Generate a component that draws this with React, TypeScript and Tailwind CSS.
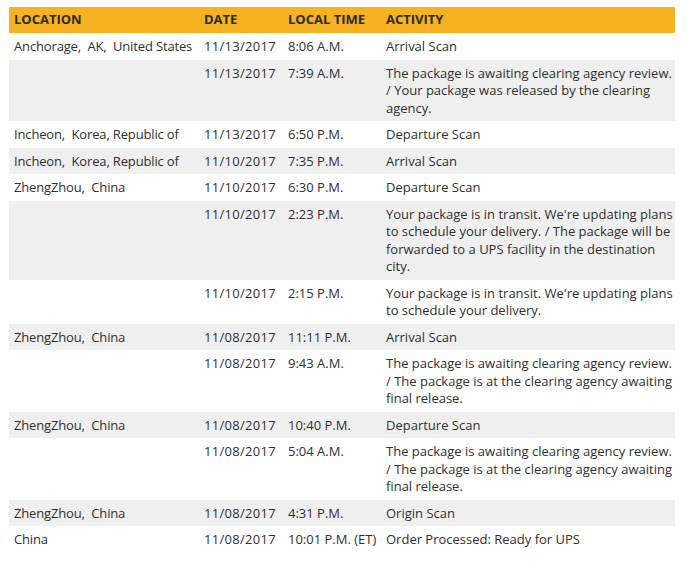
import React from 'react';

type Row = { loc?: string; date: string; time: string; activity: string };

const rows: Row[] = [
    { loc: 'Anchorage,  AK,  United States', date: '11/13/2017', time: '8:06 A.M.', activity: 'Arrival Scan' },
    {
        date: '11/13/2017',
        time: '7:39 A.M.',
        activity: 'The package is awaiting clearing agency review. / Your package was released by the clearing agency.',
    },
    { loc: 'Incheon,  Korea, Republic of', date: '11/13/2017', time: '6:50 P.M.', activity: 'Departure Scan' },
    { loc: 'Incheon,  Korea, Republic of', date: '11/10/2017', time: '7:35 P.M.', activity: 'Arrival Scan' },
    { loc: 'ZhengZhou,  China', date: '11/10/2017', time: '6:30 P.M.', activity: 'Departure Scan' },
    {
        date: '11/10/2017',
        time: '2:23 P.M.',
        activity:
            "Your package is in transit. We're updating plans to schedule your delivery. / The package will be forwarded to a UPS facility in the destination city.",
    },
    {
        date: '11/10/2017',
        time: '2:15 P.M.',
        activity: "Your package is in transit. We're updating plans to schedule your delivery.",
    },
    { loc: 'ZhengZhou,  China', date: '11/08/2017', time: '11:11 P.M.', activity: 'Arrival Scan' },
    {
        date: '11/08/2017',
        time: '9:43 A.M.',
        activity: 'The package is awaiting clearing agency review. / The package is at the clearing agency awaiting final release.',
    },
    { loc: 'ZhengZhou,  China', date: '11/08/2017', time: '10:40 P.M.', activity: 'Departure Scan' },
    {
        date: '11/08/2017',
        time: '5:04 A.M.',
        activity: 'The package is awaiting clearing agency review. / The package is at the clearing agency awaiting final release.',
    },
    { loc: 'ZhengZhou,  China', date: '11/08/2017', time: '4:31 P.M.', activity: 'Origin Scan' },
    { loc: 'China', date: '11/08/2017', time: '10:01 P.M. (ET)', activity: 'Order Processed: Ready for UPS' },
];

export default function App() {
    return (
        <div className="min-h-[572px] bg-white pt-[7px] pl-[9px] pr-[12px] font-['Open_Sans',sans-serif] text-[#2f2f2f]">
            <table className="w-[666px] table-fixed border-collapse text-[13px] leading-[17.5px]">
                <colgroup>
                    <col className="w-[190px]" />
                    <col className="w-[84px]" />
                    <col className="w-[98px]" />
                    <col />
                </colgroup>
                <thead>
                    <tr className="bg-[#f6b221] text-left text-[13px] font-bold uppercase text-[#2b2b2b]">
                        <th className="h-[26px] px-[5px] align-middle">Location</th>
                        <th className="px-[5px] align-middle">Date</th>
                        <th className="px-[5px] align-middle">Local Time</th>
                        <th className="px-[5px] align-middle">Activity</th>
                    </tr>
                </thead>
                <tbody>
                    {rows.map((r, i) => (
                        <tr key={i} className={i % 2 === 1 ? 'bg-[#efefef]' : 'bg-white'}>
                            <td className="whitespace-pre px-[5px] pt-[5px] pb-[4px] align-top tracking-[-0.15px]">
                                {r.loc ?? ''}
                            </td>
                            <td className="px-[5px] pt-[5px] pb-[4px] align-top tracking-[0.3px]">{r.date}</td>
                            <td className="whitespace-nowrap px-[5px] pt-[5px] pb-[4px] align-top">{r.time}</td>
                            <td className="pl-[5px] pr-[2px] pt-[5px] pb-[4px] align-top">{r.activity}</td>
                        </tr>
                    ))}
                </tbody>
            </table>
        </div>
    );
}
